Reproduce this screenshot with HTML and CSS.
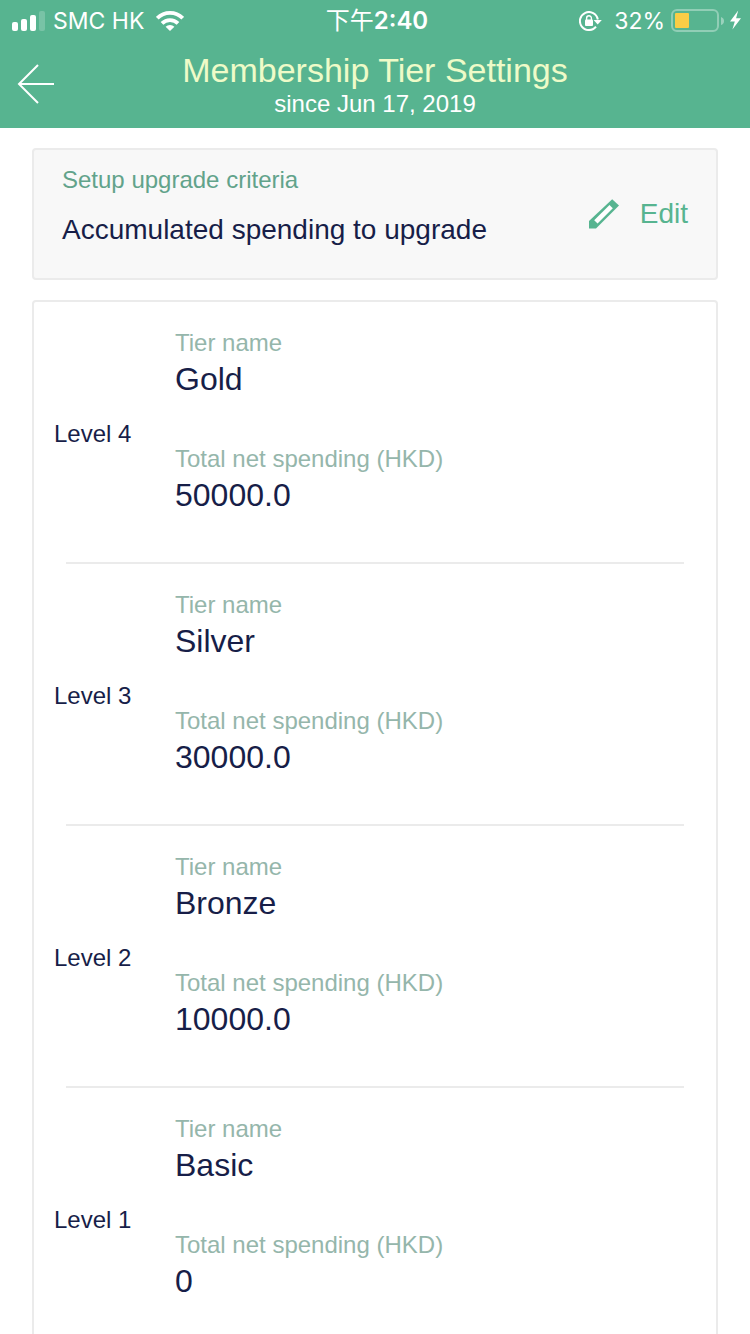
FILE: index.html
```html
<!DOCTYPE html>
<html lang="en">
<head>
<meta charset="UTF-8">
<meta name="viewport" content="width=device-width, initial-scale=1.0">
<title>Membership Tier Settings</title>
<link rel="stylesheet" href="styles.css">
</head>
<body>

<header class="header">
  <div class="status">
    <div class="status-left">
      <svg width="33" height="20" viewBox="0 0 33 20" fill="#fff">
        <rect x="0" y="11" width="6" height="9" rx="2"/>
        <rect x="9" y="8" width="6" height="12" rx="2"/>
        <rect x="18" y="4" width="6" height="16" rx="2"/>
        <rect x="27" y="0" width="6" height="20" rx="2" opacity="0.2"/>
      </svg>
      <span class="carrier">SMC HK</span>
      <svg width="28" height="20" viewBox="0 0 28 20" fill="none" stroke="#fff" stroke-width="3.8">
        <path d="M1.3 7.2a18 18 0 0 1 25.4 0"/>
        <path d="M6 12.4a11.4 11.4 0 0 1 16 0"/>
        <path d="M14 20l-4.4-4.2a6.3 6.3 0 0 1 8.8 0z" fill="#fff" stroke="none"/>
      </svg>
    </div>
    <div class="status-time">下午<b>2:40</b></div>
    <div class="status-right">
      <svg width="23" height="20" viewBox="0 0 23 20" fill="none">
        <path d="M18.8 8.5A9 9 0 1 0 17 15.6" stroke="#fff" stroke-width="2"/>
        <path d="M14.6 9h8.2l-4.1 4.6z" fill="#fff"/>
        <rect x="6" y="8.6" width="8" height="6.4" rx="1" fill="#fff"/>
        <path d="M7.6 9V7.2a2.4 2.4 0 0 1 4.8 0V9" stroke="#fff" stroke-width="1.4"/>
      </svg>
      <span class="percent">32%</span>
      <svg width="71" height="23" viewBox="0 0 71 23">
        <rect x="1" y="1" width="46" height="21" rx="5" fill="none" stroke="#fff" stroke-opacity="0.35" stroke-width="2"/>
        <rect x="4" y="4" width="14" height="15" rx="1" fill="#facd46"/>
        <path d="M50 8q3 1 3 4t-3 4z" fill="#fff" opacity="0.4"/>
        <path d="M67.2 1.5L59 12.6h4.8L61.4 20.6L70 9.2h-4.9z" fill="#fff"/>
      </svg>
    </div>
  </div>
  <div class="titlebar">
    <button class="back" type="button" aria-label="Back">
      <svg width="38" height="42" viewBox="0 0 38 42" fill="none" stroke="#fff" stroke-width="2">
        <path d="M21 2L2 21l19 19M2 21h35"/>
      </svg>
    </button>
    <div class="heading">
      <h1>Membership Tier Settings</h1>
      <p>since Jun 17, 2019</p>
    </div>
  </div>
</header>

<main class="main">
  <section class="card criteria">
    <div>
      <h2>Setup upgrade criteria</h2>
      <p>Accumulated spending to upgrade</p>
    </div>
    <button class="edit" type="button">
      <svg width="32" height="30" viewBox="0 0 32 30" fill="#57b490">
        <path d="M1 29.5V22L24.2 0.2L31 6.6L8 29.5z"/>
        <path fill="#fff" d="M6.2 21.3l3.4 3.2L24.8 9.2l-3.3-3.2z"/>
      </svg>
      <span>Edit</span>
    </button>
  </section>

  <section class="card">
    <div class="tier">
      <h3>Level 4</h3>
      <dl>
        <dt>Tier name</dt>
        <dd>Gold</dd>
        <dt>Total net spending (HKD)</dt>
        <dd>50000.0</dd>
      </dl>
    </div>
    <hr>
    <div class="tier">
      <h3>Level 3</h3>
      <dl>
        <dt>Tier name</dt>
        <dd>Silver</dd>
        <dt>Total net spending (HKD)</dt>
        <dd>30000.0</dd>
      </dl>
    </div>
    <hr>
    <div class="tier">
      <h3>Level 2</h3>
      <dl>
        <dt>Tier name</dt>
        <dd>Bronze</dd>
        <dt>Total net spending (HKD)</dt>
        <dd>10000.0</dd>
      </dl>
    </div>
    <hr>
    <div class="tier">
      <h3>Level 1</h3>
      <dl>
        <dt>Tier name</dt>
        <dd>Basic</dd>
        <dt>Total net spending (HKD)</dt>
        <dd>0</dd>
      </dl>
    </div>
  </section>
</main>

</body>
</html>
```
FILE: styles.css
```css
* {
  box-sizing: border-box;
}

body {
  margin: 0;
  font-family: "Liberation Sans", Arial, sans-serif;
  font-size: 24px;
  line-height: 28px;
  color: #171e48;
  background-color: #fff;
}

h1, h2, h3, p, dl, dd {
  margin: 0;
  font-weight: normal;
}

button {
  padding: 0;
  border: none;
  background: none;
  font: inherit;
  cursor: pointer;
}

svg {
  display: block;
}

/* Header */
.header {
  background-color: #57b490;
  color: #fff;
}

.status {
  display: grid;
  grid-template-columns: 1fr auto 1fr;
  align-items: center;
  height: 40px;
  padding: 1px 8px 0 12px;
  font-family: Inter, "Noto Sans CJK TC", sans-serif;
}

.status-left,
.status-right {
  display: flex;
  align-items: center;
}

.carrier {
  margin: 0 12px 0 8px;
  font-size: 23px;
}

.status-time b {
  font-weight: 600;
}

.status-right {
  justify-content: flex-end;
}

.percent {
  margin: 0 6px 0 12px;
  font-size: 23px;
}

.titlebar {
  display: grid;
  grid-template-columns: 72px 1fr 72px;
  height: 88px;
  align-items: center;
}

.back {
  justify-self: center;
}

.heading {
  text-align: center;
}

.heading h1 {
  font-size: 34px;
  line-height: 40px;
  color: #eefbc8;
}

/* Cards */
.main {
  padding: 20px 32px;
}

.card {
  margin-bottom: 20px;
  border: 2px solid #ebebeb;
  border-radius: 4px;
}

.criteria {
  display: flex;
  justify-content: space-between;
  padding: 0 28px;
  background-color: #f8f8f8;
}

.criteria > div {
  padding: 16px 0 28px;
}

.criteria h2 {
  margin-bottom: 16px;
  font-size: 24px;
  color: #62a38b;
}

.criteria p {
  font-size: 28px;
  line-height: 40px;
}

.edit {
  display: flex;
  align-items: center;
  gap: 20px;
  font-size: 28px;
  color: #57b490;
}

/* Tiers */
.tier {
  display: grid;
  grid-template-columns: 121px 1fr;
  align-items: center;
  padding: 0 20px;
}

.tier h3 {
  padding-top: 4px;
  font-size: 24px;
}

.tier dl {
  padding: 27px 0 45px;
}

.tier dt {
  color: #95b6ab;
}

.tier dd {
  font-size: 32px;
  line-height: 44px;
}

.tier dd + dt {
  margin-top: 44px;
}

hr {
  height: 2px;
  margin: 0 32px;
  border: none;
  background-color: #ebebeb;
}
```
